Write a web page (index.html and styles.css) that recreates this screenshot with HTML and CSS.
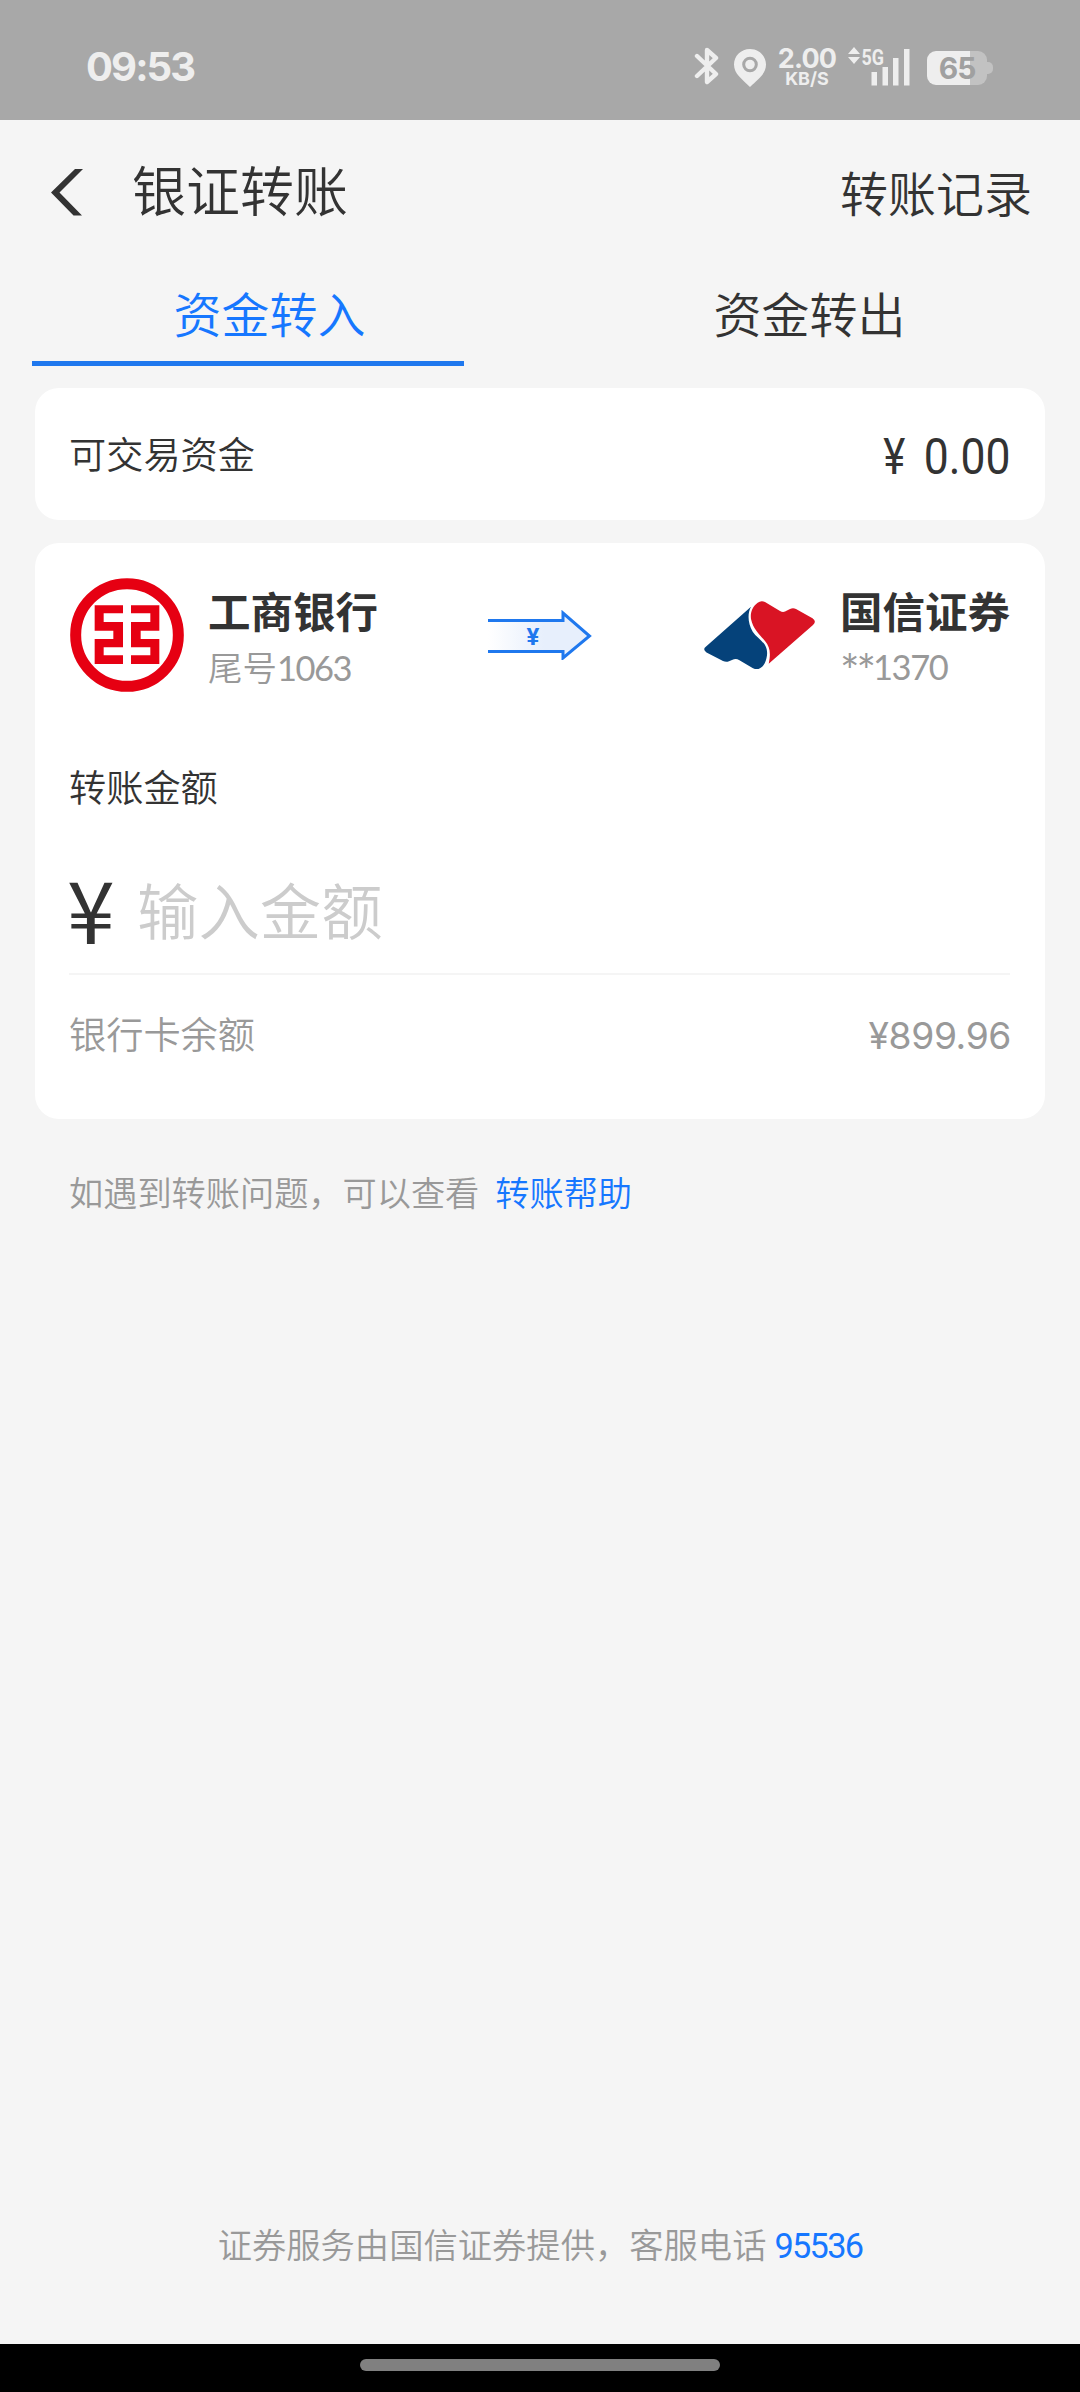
FILE: index.html
```html
<!DOCTYPE html>
<html lang="zh-CN">
<head>
<meta charset="utf-8">
<title>银证转账</title>
<link rel="stylesheet" href="styles.css">
</head>
<body>
<div class="status">
  <span class="time">09:53</span>
  <div class="status-icons">
    <svg class="bt" width="26" height="40" viewBox="0 0 26 40"><path d="M3 10 L22 28 L13 36 V4 L22 12 L3 30" fill="none" stroke="#eee" stroke-width="4.4" stroke-linejoin="round" stroke-linecap="round"/></svg>
    <svg class="pin" width="32" height="38" viewBox="0 0 32 38"><path fill="#eee" d="M16 0C7 0 0 7 0 15.500C0 25 8 30 16 38C24 30 32 25 32 15.500C32 7 25 0 16 0Z"/><circle cx="16" cy="15.500" r="6.300" fill="none" stroke="#a8a8a8" stroke-width="3"/></svg>
    <div class="speed"><span class="rate">2.00</span><span class="unit">KB/S</span></div>
    <svg class="signal" width="64" height="40" viewBox="0 0 64 40"><path fill="#eee" d="M1 8L7 1L13 8ZM1 11H13L7 18ZM24.500 26h5.500v13.500h-5.500zM35.500 21h5.500v18.500h-5.500zM46 12h5.500v27.500h-5.500zM57 3h5.500v36.500h-5.500z"/><text class="net" x="14.500" y="18.500" textLength="22.500" lengthAdjust="spacingAndGlyphs">5G</text></svg>
    <div class="battery"><span class="level">65</span></div>
  </div>
</div>
<header class="header">
  <svg class="back" width="34" height="48" viewBox="0 0 34 48"><path fill="#333" d="M25 1H33L9.500 24.500L32 47.500H23.500L1 24.500Z"/></svg>
  <h1 class="title">银证转账</h1>
  <a class="records">转账记录</a>
</header>
<nav class="tabs">
  <div class="tab active">资金转入</div>
  <div class="tab">资金转出</div>
</nav>
<main class="main">
  <section class="card funds"><span>可交易资金</span><span class="amount"><span class="sign">¥</span><span class="digits">0.00</span></span></section>
  <section class="card transfer">
    <div class="route">
      <svg class="bank-logo" width="114" height="114" viewBox="0 0 342 342"><circle cx="171" cy="171" r="154" fill="none" stroke="#e60012" stroke-width="33"/><path fill="#e60012" d="M74 82H159V106H101V132H159V208H101V232H159V258H74V183H130V158H74ZM268 82H183V106H241V132H183V208H241V232H183V258H268V183H212V158H268Z"/></svg>
      <div class="party"><b class="name">工商银行</b><span class="no">尾号<span class="num">1063</span></span></div>
      <svg class="arrow" width="106" height="50" viewBox="0 0 106 50"><defs><linearGradient id="fade"><stop offset="0" stop-color="#fff"/><stop offset=".55" stop-color="#e7effc"/><stop offset="1" stop-color="#e7effc"/></linearGradient></defs><path d="M0 10.500H75V3L101.500 26L75 48V41.500H0" fill="url(#fade)" stroke="#1f78ee" stroke-width="3"/><text class="yen" x="45" y="34.500" text-anchor="middle">¥</text></svg>
      <svg class="broker-logo" width="112" height="70" viewBox="0 0 112 70"><path fill="#05427a" d="M47 5.700C43.500 12 43.500 22 48.700 30.700C54 39 66 42 62.500 57C61.500 62 59 66 56 67.200Q53 69 49 67.200L35 59Q32 57 28 59L25 60.300Q22 61.500 19 60L2.500 51.500Q-1.500 48.500 1.500 46Z"/><path fill="#d91424" d="M53.700 1.700Q57 -1 61 1L76 10Q79.500 12 83 9.500L86 8Q89 6.500 92 8L108.500 17.300Q113 20.500 109 24L64.700 62.800C67 52 66 46 61 40C56 34 49 28 47 18C46 11 49 5 53.700 1.700Z"/></svg>
      <div class="party broker"><b class="name">国信证券</b><span class="no num"><span class="mask">**</span>1370</span></div>
    </div>
    <div class="label">转账金额</div>
    <div class="entry"><span class="currency">¥</span><span class="placeholder">输入金额</span></div>
    <div class="balance"><span>银行卡余额</span><span class="value">¥899.96</span></div>
  </section>
  <p class="help">如遇到转账问题，可以查看<a class="link">转账帮助</a></p>
</main>
<footer class="footer"><span>证券服务由国信证券提供，客服电话</span><a class="phone">95536</a></footer>
<div class="navbar"><i class="handle"></i></div>
</body>
</html>
```
FILE: styles.css
```css
* { box-sizing: border-box; }
body {
  margin: 0;
  width: 1080px;
  height: 2392px;
  overflow: hidden;
  display: flex;
  flex-direction: column;
  background: #f5f5f5;
  color: #333;
  font-family: "Noto Sans CJK SC", sans-serif;
  font-weight: 350;
}
svg { display: block; flex: none; }

.status {
  height: 120px;
  flex: none;
  display: flex;
  justify-content: space-between;
  align-items: flex-start;
  padding: 46px 87px 0 86px;
  background: #a8a8a8;
  color: #eee;
  font-family: Inter, sans-serif;
  font-weight: 700;
}
.time { font-size: 40px; line-height: 42px; font-weight: 650; letter-spacing: -1.900px; }
.status-icons { display: flex; height: 40px; }
.bt { margin-right: 14px; }
.pin { margin: 3px 13px 0 0; }
.speed { width: 58px; display: flex; flex-direction: column; align-items: center; margin: 0 11px 0 -1px; }
.rate { font-size: 27px; line-height: 25px; font-weight: 650; letter-spacing: -0.8px; }
.unit { font-size: 18px; line-height: 15px; font-weight: 700; }
.signal { margin-right: 16px; overflow: visible; }
.net { font-family: Roboto, sans-serif; font-size: 22px; font-weight: 700; fill: #eee; }
.battery {
  position: relative;
  width: 60px;
  height: 34px;
  margin: 5px 6px 0 0;
  border-radius: 9px;
  background: linear-gradient(90deg, #eee 43px, #c2c2c2 43px);
  text-align: center;
}
.battery::after {
  content: "";
  position: absolute;
  left: 60px;
  top: 11px;
  width: 6px;
  height: 12px;
  border-radius: 0 5px 5px 0;
  background: #c2c2c2;
}
.level { font-size: 30px; line-height: 35px; color: #a0a0a0; letter-spacing: -1px; }

.header { height: 146px; flex: none; display: flex; align-items: center; padding: 0 48px 0 50px; }
.back { margin-top: -2px; }
.title { margin: -8px auto 0 48px; font-size: 54px; line-height: 80px; font-weight: 350; }
.records { font-size: 48px; line-height: 72px; margin-top: -5px; }

.tabs { height: 100px; flex: none; display: flex; }
.tab {
  flex: 1;
  height: 100px;
  margin: 0 76px 0 32px;
  padding-left: 43px;
  text-align: center;
  font-size: 48px;
  line-height: 93px;
  border-bottom: 5px solid transparent;
}
.active { color: #1677ff; border-color: #1f78ee; }

.main { padding: 22px 35px 0; flex: 1; }
.card { background: #fff; border-radius: 24px; padding: 0 35px 0 34px; font-size: 37.200px; }
.funds { height: 132px; display: flex; justify-content: space-between; align-items: center; padding-bottom: 3px; }
.amount { display: flex; align-items: center; font: 50px/60px Roboto, sans-serif; padding-top: 8px; }
.sign { transform: scaleX(.84); transform-origin: right; margin-right: 15px; }
.digits { transform: scaleX(.89); transform-origin: right; margin-left: -8px; }
.transfer { height: 576px; margin-top: 23px; padding-top: 35px; }
.route { display: flex; height: 114px; padding-left: 1px; }
.party { display: flex; flex-direction: column; margin-left: 24px; }
.name { font-size: 42.500px; line-height: 64px; font-weight: 700; }
.no { font-size: 34.500px; line-height: 49px; color: #999; white-space: nowrap; }
.num { font-family: Lato, sans-serif; font-weight: 400; letter-spacing: -1.500px; }
.broker { width: 170px; }
.mask { font-size: 46px; line-height: 40px; vertical-align: -8px; letter-spacing: -3px; }
.arrow { margin: 32px 0 0 110px; }
.yen { font-family: Roboto, sans-serif; font-size: 24px; font-weight: 700; fill: #1f78ee; }
.broker-logo { margin: 23px 0 0 auto; }
.label { margin-top: 64px; line-height: 60px; }
.entry { height: 159px; display: flex; align-items: center; border-bottom: 2px solid #f5f5f5; padding-top: 28px; }
.currency { font-size: 86px; line-height: 90px; width: 68px; margin: -3px 2px 0 -2px; font-weight: 400; }
.placeholder { font-size: 61.400px; line-height: 90px; color: #ccc; }
.balance { display: flex; justify-content: space-between; align-items: center; height: 116px; color: #999; }
.value { font-family: Inter, sans-serif; font-weight: 400; letter-spacing: -0.400px; padding-top: 4px; margin-right: -1px; }
.help { margin: 46px 0 0 34px; font-size: 34.200px; line-height: 52px; color: #999; }
.link { margin-left: 16px; color: #1677ff; }

.footer {
  height: 199px;
  flex: none;
  display: flex;
  justify-content: center;
  gap: 8px;
  padding-top: 73px;
  font-size: 34.300px;
  line-height: 50px;
  color: #999;
}
.phone { font-family: Roboto, sans-serif; font-weight: 400; color: #1677ff; letter-spacing: -1.700px; padding-top: 3px; }
.navbar { height: 48px; flex: none; background: #000; padding-top: 15px; }
.handle { display: block; width: 360px; height: 12px; margin: 0 auto; border-radius: 6px; background: #808080; }
```
